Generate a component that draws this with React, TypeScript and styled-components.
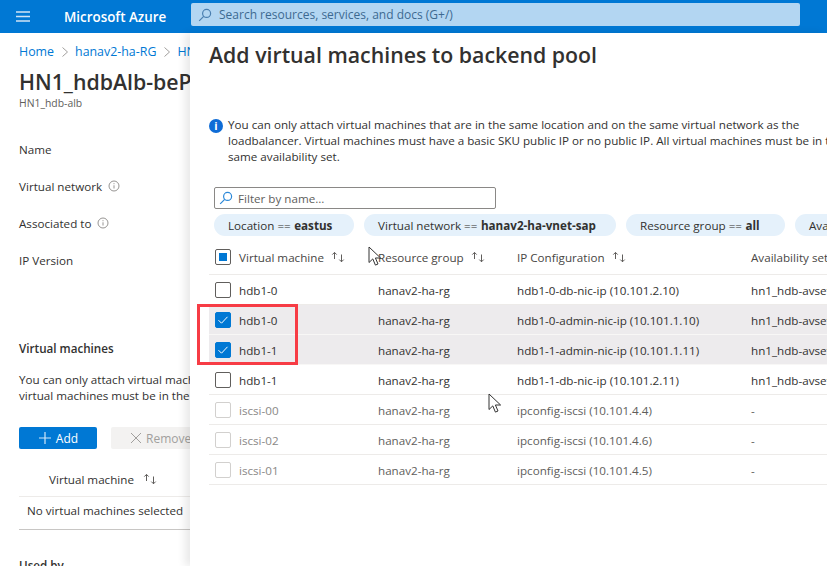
import React from "react";
import styled, { createGlobalStyle } from "styled-components";

interface VmRow {
    name: string;
    group: string;
    ip: string;
    avset: string;
    selected?: boolean;
    disabled?: boolean;
}

const vmRows: VmRow[] = [
    { name: "hdb1-0", group: "hanav2-ha-rg", ip: "hdb1-0-db-nic-ip (10.101.2.10)", avset: "hn1_hdb-avset" },
    { name: "hdb1-0", group: "hanav2-ha-rg", ip: "hdb1-0-admin-nic-ip (10.101.1.10)", avset: "hn1_hdb-avset", selected: true },
    { name: "hdb1-1", group: "hanav2-ha-rg", ip: "hdb1-1-admin-nic-ip (10.101.1.11)", avset: "hn1_hdb-avset", selected: true },
    { name: "hdb1-1", group: "hanav2-ha-rg", ip: "hdb1-1-db-nic-ip (10.101.2.11)", avset: "hn1_hdb-avset" },
    { name: "iscsi-00", group: "hanav2-ha-rg", ip: "ipconfig-iscsi (10.101.4.4)", avset: "-", disabled: true },
    { name: "iscsi-02", group: "hanav2-ha-rg", ip: "ipconfig-iscsi (10.101.4.6)", avset: "-", disabled: true },
    { name: "iscsi-01", group: "hanav2-ha-rg", ip: "ipconfig-iscsi (10.101.4.5)", avset: "-", disabled: true },
];

const SearchIcon = ({ color }: { color: string }) => (
    <svg width="14" height="14" viewBox="0 0 14 14" fill="none" stroke={color} strokeWidth="1.2">
        <circle cx="8.6" cy="5.4" r="4" />
        <path d="M5.7 8.3 1.2 12.8" />
    </svg>
);

const SortArrows = () => (
    <SortIcon width="16" height="12" viewBox="0 0 16 12" fill="none" stroke="#605e5c" strokeWidth="1">
        <path d="M4.5 8V1.5M2.3 3.6l2.2-2.2 2.2 2.2" />
        <path d="M11.5 3.5V11M9.3 8.6l2.2 2.2 2.2-2.2" />
    </SortIcon>
);

const SmallInfo = () => (
    <svg width="12" height="12" viewBox="0 0 12 12" fill="none" stroke="#8a8886" strokeWidth="0.9">
        <circle cx="6" cy="6" r="5" />
        <path d="M6 5.3v3.2M6 3.2v1" />
    </svg>
);

const Pointer = () => (
    <svg width="14" height="21" viewBox="0 0 14 21" fill="#fff" stroke="#333" strokeWidth="1">
        <path d="M1 1v15.5l3.8-3.6 2.6 6.2 2.6-1.1-2.6-6h5.2z" />
    </svg>
);

const Chevron = () => (
    <ChevronIcon width="8" height="10" viewBox="0 0 8 10" fill="none" stroke="#a19f9d" strokeWidth="1">
        <path d="M1.500 0.500 6.500 5 1.500 9.500" />
    </ChevronIcon>
);

export default function App() {
    return (
        <>
            <GlobalStyle />
            <Page>
                <TopBar>
                    <MenuIcon width="14" height="11" viewBox="0 0 14 11" stroke="#cfe3f5" strokeWidth="1.3">
                        <path d="M0 1h14M0 5.500h14M0 10h14" />
                    </MenuIcon>
                    <Brand>Microsoft Azure</Brand>
                    <SearchBar>
                        <SearchIcon color="#4a7fb0" />
                        <span>Search resources, services, and docs (G+/)</span>
                    </SearchBar>
                </TopBar>
                <Content>
                    <LeftBlade>
                        <Breadcrumb>
                            <a>Home</a>
                            <Chevron />
                            <a>hanav2-ha-RG</a>
                            <Chevron />
                            <a>HN1_hdb-alb</a>
                        </Breadcrumb>
                        <BladeTitle>HN1_hdbAlb-bePool</BladeTitle>
                        <BladeSub>HN1_hdb-alb</BladeSub>
                        <FieldList>
                            <Field>Name</Field>
                            <Field>
                                Virtual network <SmallInfo />
                            </Field>
                            <Field>
                                Associated to <SmallInfo />
                            </Field>
                            <Field>IP Version</Field>
                        </FieldList>
                        <SectionTitle>Virtual machines</SectionTitle>
                        <SectionText>
                            You can only attach virtual machines in the same location
                            <br />
                            virtual machines must be in the same availability set.
                        </SectionText>
                        <ButtonRow>
                            <AddButton>
                                <svg width="14" height="14" viewBox="0 0 14 14" stroke="#cfe6f8" strokeWidth="1.2">
                                    <path d="M7 1v12M1 7h12" />
                                </svg>
                                Add
                            </AddButton>
                            <RemoveButton>
                                <svg width="12" height="12" viewBox="0 0 12 12" stroke="#a19f9d" strokeWidth="1">
                                    <path d="M1 1l10 10M11 1 1 11" />
                                </svg>
                                Remove
                            </RemoveButton>
                        </ButtonRow>
                        <MiniHeader>
                            Virtual machine <SortArrows />
                        </MiniHeader>
                        <MiniRow>No virtual machines selected</MiniRow>
                        <UsedBy>Used by</UsedBy>
                    </LeftBlade>
                    <Panel>
                        <PanelTitle>Add virtual machines to backend pool</PanelTitle>
                        <InfoBlock>
                            <InfoBadge>i</InfoBadge>
                            <p>
                                You can only attach virtual machines that are in the same location and on the same virtual network as the
                                <br />
                                loadbalancer. Virtual machines must have a basic SKU public IP or no public IP. All virtual machines must be in the
                                <br />
                                same availability set.
                            </p>
                        </InfoBlock>
                        <FilterBox>
                            <SearchIcon color="#2b88d8" />
                            <span>Filter by name...</span>
                        </FilterBox>
                        <PillRow>
                            <Pill $width={140}>
                                Location == <b>eastus</b>
                            </Pill>
                            <Pill $width={252}>
                                Virtual network == <b>hanav2-ha-vnet-sap</b>
                            </Pill>
                            <Pill $width={159}>
                                Resource group == <b>all</b>
                            </Pill>
                            <Pill $width={120}>Availability set == all</Pill>
                        </PillRow>
                        <HeaderRow>
                            <CheckCell>
                                <MixedBox />
                            </CheckCell>
                            <HeadCell>
                                Virtual machine <SortArrows />
                            </HeadCell>
                            <HeadCell>
                                Resource group <SortArrows />
                            </HeadCell>
                            <HeadCell>
                                IP Configuration <SortArrows />
                            </HeadCell>
                            <HeadCell>Availability set</HeadCell>
                        </HeaderRow>
                        {vmRows.map((row) => (
                            <VmGridRow key={row.ip} $selected={row.selected} $disabled={row.disabled}>
                                <CheckCell>
                                    <CheckBox $checked={row.selected} $faded={row.disabled}>
                                        {row.selected && (
                                            <svg width="12" height="10" viewBox="0 0 12 10" fill="none" stroke="#fff" strokeWidth="1">
                                                <path d="M1.500 5.200 4.500 8.200 10.500 1.800" />
                                            </svg>
                                        )}
                                    </CheckBox>
                                </CheckCell>
                                <NameCell $disabled={row.disabled}>{row.name}</NameCell>
                                <div>{row.group}</div>
                                <div>{row.ip}</div>
                                <div>{row.avset}</div>
                            </VmGridRow>
                        ))}
                    </Panel>
                    <Highlight />
                    <CursorOne>
                        <Pointer />
                    </CursorOne>
                    <CursorTwo>
                        <Pointer />
                    </CursorTwo>
                </Content>
            </Page>
        </>
    );
}

const GlobalStyle = createGlobalStyle`
    html, body {
        margin: 0;
        padding: 0;
        background: #fff;
        overflow: hidden;
    }
    body {
        font-family: "Open Sans", "Noto Sans", "Liberation Sans", sans-serif;
        font-size: 11.650px;
        color: #323130;
    }
    p {
        margin: 0;
    }
`;

const Page = styled.div`
    width: 827px;
    height: 566px;
    display: flex;
    flex-direction: column;
    overflow: hidden;
`;

const TopBar = styled.header`
    height: 33px;
    flex: none;
    background: #0078d4;
    display: flex;
    align-items: center;
    padding: 0 0 0 16px;
`;

const MenuIcon = styled.svg`
    flex: none;
`;

const Brand = styled.div`
    margin-left: 34px;
    width: 127px;
    color: #fff;
    font-size: 13.400px;
    font-weight: 600;
    white-space: nowrap;
`;

const SearchBar = styled.div`
    width: 609px;
    height: 23px;
    margin-bottom: 4px;
    box-sizing: border-box;
    padding-left: 7px;
    display: flex;
    align-items: center;
    gap: 7px;
    background: #b3d6f2;
    border-radius: 2px;
    color: #3d6a91;
    font-size: 12px;
    white-space: nowrap;
`;

const Content = styled.main`
    flex: 1;
    position: relative;
    display: flex;
    min-height: 0;
`;

const LeftBlade = styled.section`
    width: 190px;
    flex: none;
    box-sizing: border-box;
    padding: 11px 0 0 19px;
    overflow: hidden;
    white-space: nowrap;
`;

const Breadcrumb = styled.nav`
    height: 16px;
    display: flex;
    align-items: center;
    gap: 6.500px;
    font-size: 12.400px;
    line-height: 16px;
    color: #0078d4;
`;

const ChevronIcon = styled.svg`
    flex: none;
`;

const BladeTitle = styled.h1`
    margin: 8px 0 0;
    font-size: 21.300px;
    line-height: 28px;
    font-weight: 600;
    color: #323130;
`;

const BladeSub = styled.div`
    margin-top: 1px;
    font-size: 10.400px;
    line-height: 13px;
    color: #605e5c;
`;

const FieldList = styled.div`
    margin-top: 29px;
    display: grid;
    grid-auto-rows: 37px;
`;

const Field = styled.div`
    display: flex;
    align-items: center;
    gap: 6px;
    height: 20px;
`;

const SectionTitle = styled.h2`
    margin: 54px 0 0;
    font-size: 11.650px;
    line-height: 16px;
    font-weight: 600;
`;

const SectionText = styled.p`
    margin-top: 15px;
    line-height: 16px;
`;

const ButtonRow = styled.div`
    margin-top: 23px;
    display: flex;
    gap: 14px;
`;

const AddButton = styled.div`
    width: 78px;
    height: 22px;
    flex: none;
    display: flex;
    align-items: center;
    justify-content: center;
    gap: 4px;
    background: #0078d4;
    border-radius: 2px;
    color: #fff;
    font-size: 12px;
`;

const RemoveButton = styled.div`
    width: 90px;
    height: 22px;
    flex: none;
    display: flex;
    align-items: center;
    gap: 4px;
    padding-left: 19px;
    box-sizing: border-box;
    background: #f3f2f1;
    border-radius: 2px;
    color: #a19f9d;
    font-size: 12px;
`;

const MiniHeader = styled.div`
    height: 34px;
    margin-top: 11px;
    padding: 2px 0 0 30px;
    display: flex;
    align-items: center;
    gap: 8px;
    border-bottom: 1px solid #edebe9;
`;

const MiniRow = styled.div`
    height: 26px;
    padding: 0 0 6px 8px;
    display: flex;
    align-items: center;
    border-bottom: 1px solid #c8c6c4;
`;

const UsedBy = styled.div`
    margin-top: 28px;
    font-weight: 600;
`;

const Panel = styled.section`
    flex: 1;
    min-width: 0;
    box-sizing: border-box;
    padding: 8px 0 0 19px;
    background: #fff;
    overflow: hidden;
    white-space: nowrap;
    box-shadow: -5px 0 8px rgba(0, 0, 0, 0.09);
    position: relative;
`;

const PanelTitle = styled.h1`
    margin: 0;
    font-size: 21.300px;
    line-height: 28px;
    font-weight: 600;
    color: #323130;
`;

const InfoBlock = styled.div`
    margin-top: 48px;
    display: flex;
    gap: 5px;
    line-height: 16px;
`;

const InfoBadge = styled.span`
    width: 14px;
    height: 14px;
    margin-top: 2px;
    flex: none;
    border-radius: 50%;
    background: #0f6cd6;
    color: #fff;
    font-size: 11px;
    font-weight: 700;
    line-height: 14px;
    text-align: center;
`;

const FilterBox = styled.div`
    width: 282px;
    height: 22px;
    margin: 22px 0 0 5px;
    box-sizing: border-box;
    padding-left: 4px;
    display: flex;
    align-items: center;
    gap: 5px;
    border: 1px solid #8a8886;
    border-radius: 2px;
    color: #605e5c;
`;

const PillRow = styled.div`
    margin: 5px 0 0 5px;
    display: flex;
    gap: 10px;
`;

const Pill = styled.div<{ $width: number }>`
    width: ${(p) => p.$width}px;
    height: 22px;
    flex: none;
    box-sizing: border-box;
    padding-left: 14px;
    display: flex;
    align-items: center;
    gap: 3.500px;
    border-radius: 11px;
    background: #e5f1fb;

    b {
        font-weight: 700;
    }
`;

const gridColumns = "30px 139px 139px 234px 1fr";

const HeaderRow = styled.div`
    height: 34px;
    padding-top: 4px;
    display: grid;
    grid-template-columns: ${gridColumns};
    align-items: center;
    border-bottom: 1px solid #edebe9;
`;

const VmGridRow = styled.div<{ $selected?: boolean; $disabled?: boolean }>`
    height: 28px;
    padding-top: 1px;
    display: grid;
    grid-template-columns: ${gridColumns};
    align-items: center;
    border-bottom: 1px solid ${(p) => (p.$selected ? "#f8f7f6" : "#edebe9")};
    background: ${(p) => (p.$selected ? "#edebed" : "#fff")};
    color: ${(p) => (p.$disabled ? "#605e5c" : "#323130")};
`;

const CheckCell = styled.div`
    padding-left: 6px;
    display: flex;
    align-items: center;
`;

const SortIcon = styled.svg`
    flex: none;
`;

const HeadCell = styled.div`
    display: flex;
    align-items: center;
    gap: 6px;
    color: #484644;
`;

const NameCell = styled.div<{ $disabled?: boolean }>`
    color: ${(p) => (p.$disabled ? "#8a8886" : "#323130")};
`;

const MixedBox = styled.div`
    width: 16px;
    height: 16px;
    box-sizing: border-box;
    border: 1px solid #605e5c;
    border-radius: 2px;
    display: flex;
    align-items: center;
    justify-content: center;

    &::after {
        content: "";
        width: 8px;
        height: 8px;
        background: #0078d4;
    }
`;

const CheckBox = styled.div<{ $checked?: boolean; $faded?: boolean }>`
    width: 16px;
    height: 16px;
    box-sizing: border-box;
    border: 1px solid ${(p) => (p.$checked ? "#0078d4" : p.$faded ? "#d2d0ce" : "#605e5c")};
    border-radius: 2px;
    background: ${(p) => (p.$checked ? "#0078d4" : "#fff")};
    display: flex;
    align-items: center;
    justify-content: center;
`;

const Highlight = styled.div`
    position: absolute;
    left: 197px;
    top: 271px;
    width: 101px;
    height: 61px;
    box-sizing: border-box;
    border: 3px solid #f73c45;
    pointer-events: none;
`;

const CursorOne = styled.div`
    position: absolute;
    left: 368px;
    top: 213px;
`;

const CursorTwo = styled.div`
    position: absolute;
    left: 488px;
    top: 360px;
`;
